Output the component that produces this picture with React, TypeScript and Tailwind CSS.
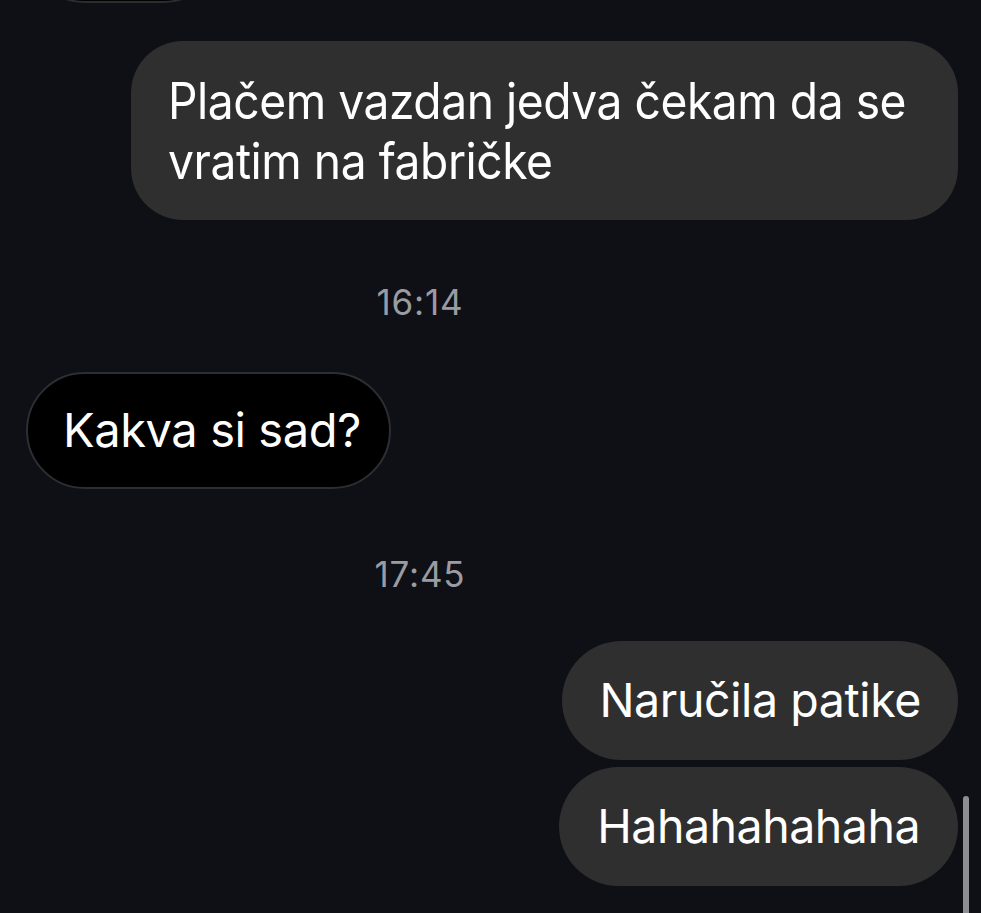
const font = { fontFamily: 'Inter, "Noto Sans", sans-serif' };

const Stamp = ({ time, className }: { time: string; className: string }) => (
  <div className={`text-center text-[35px] leading-[34px] tracking-[0.8px] text-[#9b9ca3] ${className}`}>
    <span className="inline-block translate-x-[-72px]">{time}</span>
  </div>
);

export default function App() {
  return (
    <div className="relative h-[913px] w-[981px] overflow-hidden bg-[#0e1015] text-white" style={font}>
      <div className="flex flex-col pr-[23px] pl-[26px]">
        {/* tail of the previous message, scrolled off the top */}
        <div className="-mt-[114px] h-[117px] w-[196px] rounded-full border-2 border-[#2c2d31] bg-black" />

        <div className="mt-[38px] flex justify-end">
          <div className="w-[827px] rounded-[52px] bg-[#2f2f2f] px-[37px] pt-[30px] pb-[29px] text-[50px] leading-[60px] tracking-[-0.5px]">
            <div className="origin-left scale-x-[0.924] whitespace-nowrap">Plačem vazdan jedva čekam da se</div>
            <div className="origin-left scale-x-[0.924] whitespace-nowrap">vratim na fabričke</div>
          </div>
        </div>

        <Stamp time="16:14" className="mt-[65px]" />

        <div className="mt-[53px] flex">
          <div className="flex h-[117px] items-center rounded-full border-2 border-[#2d2e33] bg-black pl-[35px] pr-[28px] text-[47px] tracking-[-0.4px]">
            Kakva si sad?
          </div>
        </div>

        <Stamp time="17:45" className="mt-[68px]" />

        <div className="mt-[50px] flex flex-col items-end gap-[7px]">
          <div className="flex h-[119px] items-center rounded-full bg-[#2f2f2f] pl-[37px] pr-[37px] text-[46.5px] tracking-[-0.4px]">
            Naručila patike
          </div>
          <div className="flex h-[119px] items-center rounded-full bg-[#2f2f2f] pl-[38px] pr-[38px] text-[46.5px] tracking-[-0.5px]">
            Hahahahahaha
          </div>
        </div>
      </div>

      {/* scroll indicator */}
      <div className="absolute left-[963px] top-[796px] h-[130px] w-[6px] rounded-full bg-[#8e8e93]" />
    </div>
  );
}
